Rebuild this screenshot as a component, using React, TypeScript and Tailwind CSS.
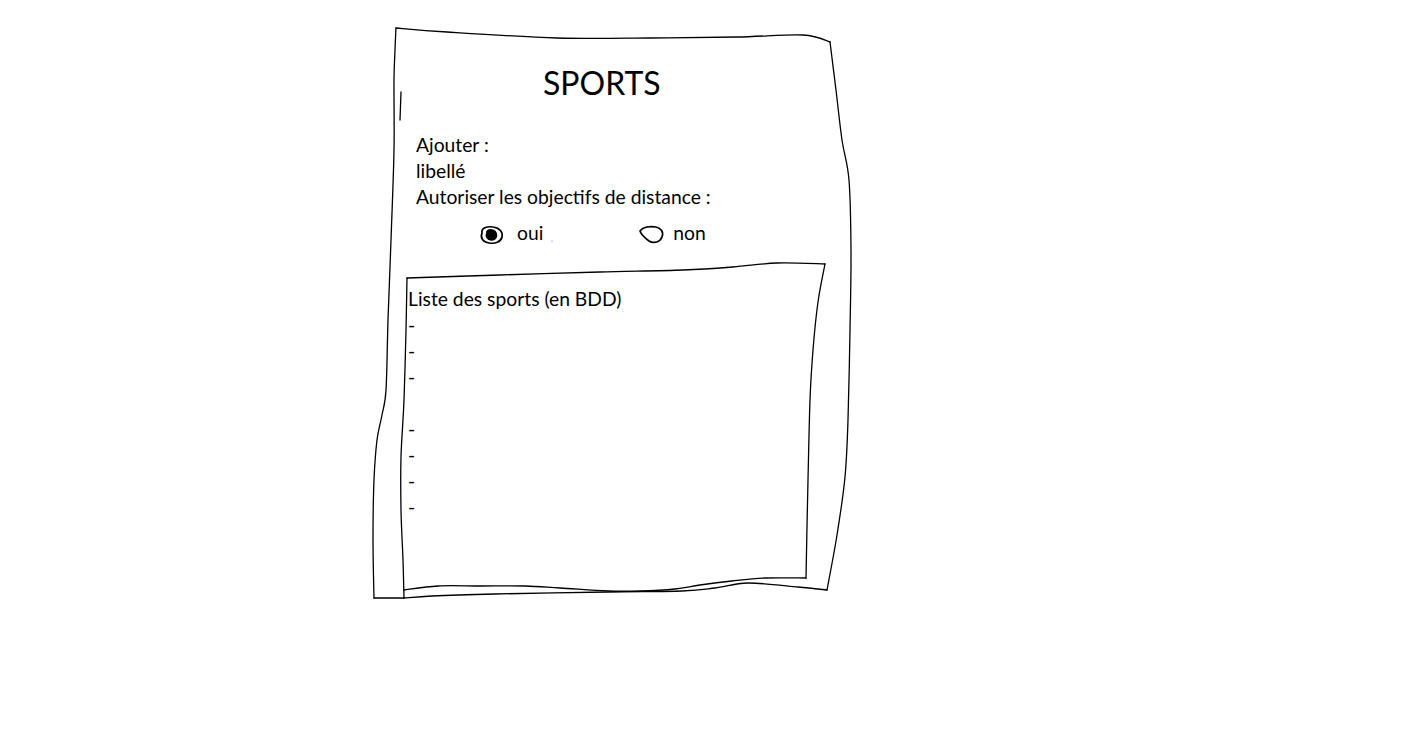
import React from "react";

const font = { fontFamily: "Lato, 'Open Sans', sans-serif" };

type P = [number, number];

function smooth(pts: P[], closed = false): string {
  const n = pts.length;
  const get = (i: number): P => {
    if (closed) return pts[(i + n) % n];
    return pts[Math.max(0, Math.min(n - 1, i))];
  };
  let d = `M${pts[0][0]},${pts[0][1]}`;
  const segs = closed ? n : n - 1;
  for (let i = 0; i < segs; i++) {
    const p0 = get(i - 1);
    const p1 = get(i);
    const p2 = get(i + 1);
    const p3 = get(i + 2);
    const t = 0.5 / 3;
    const c1x = p1[0] + (p2[0] - p0[0]) * t;
    const c1y = p1[1] + (p2[1] - p0[1]) * t;
    const c2x = p2[0] - (p3[0] - p1[0]) * t;
    const c2y = p2[1] - (p3[1] - p1[1]) * t;
    d += ` C${c1x.toFixed(1)},${c1y.toFixed(1)} ${c2x.toFixed(1)},${c2y.toFixed(1)} ${p2[0]},${p2[1]}`;
  }
  return d;
}

const topEdge: P[] = [[396, 28], [447, 32], [557, 38], [650, 38], [737, 37], [803, 35], [830, 42]];
const rightEdge: P[] = [[830, 42], [836, 90], [842, 140], [849, 180], [851, 250], [850, 330], [848, 420], [845, 477], [837, 535], [827, 590]];
const bottomEdge: P[] = [[827, 590], [798, 587], [748, 583], [715, 588], [682, 591], [608, 592], [495, 594], [432, 596], [404, 598]];
const leftEdge: P[] = [[374, 598], [373, 540], [374, 480], [377, 440], [382, 415], [386, 390], [388, 320], [391, 240], [394, 150], [394, 80], [395, 50], [396, 28]];

const innerLeft: P[] = [[404, 598], [403, 560], [401, 510], [401, 457], [404, 400], [406, 330], [407, 278]];
const innerTop: P[] = [[407, 278], [500, 275], [600, 272], [683, 270], [733, 267], [777, 263], [825, 264]];
const innerRight: P[] = [[825, 264], [818, 302], [813, 350], [810, 400], [808, 480], [806, 578]];
const innerBottom: P[] = [[806, 578], [765, 578], [732, 581], [700, 585], [675, 589], [640, 591], [608, 591], [560, 588], [525, 586], [480, 586], [438, 586], [404, 590]];

function Sketch() {
  return (
    <svg
      className="absolute inset-0 pointer-events-none"
      width={1427}
      height={734}
      viewBox="0 0 1427 734"
      fill="none"
      stroke="black"
      strokeWidth={1.3}
      strokeLinejoin="round"
      strokeLinecap="round"
    >
      <path d={smooth(topEdge)} />
      <path d={smooth(rightEdge)} />
      <path d={smooth(bottomEdge)} />
      <path d="M404,598 L374,598" />
      <path d={smooth(leftEdge)} />
      <path d="M401,92 L400,120" />
      <path d={smooth(innerLeft)} />
      <path d={smooth(innerTop)} />
      <path d={smooth(innerRight)} />
      <path d={smooth(innerBottom)} />
      {/* radio oui */}
      <path d="M482,233 C481,228 487,226 493,227 C500,228 503,232 502,237 C501,242 495,244 489,243 C483,242 480,238 482,233 Z" strokeWidth={1.7} />
      <path d="M487,232 C489,229 495,230 496,234 C497,238 493,241 489,239 C486,237 486,234 488,233 L493,236 L490,234 Z" fill="black" strokeWidth={2.2} />
      {/* radio non */}
      <path d="M640,231 C643,227 650,226 656,227 C661,228 664,232 662,237 C660,242 654,244 649,241 C645,238 641,234 640,231 Z" strokeWidth={1.7} />
      <circle cx={552} cy={241} r={0.6} fill="#3a5ccc" stroke="none" />
    </svg>
  );
}

export default function App() {
  return (
    <div className="relative w-[1427px] h-[734px] bg-white overflow-hidden text-black" style={font}>
      <Sketch />
      <div className="relative flex flex-col pt-[63px]">
        <div className="ml-[543px] text-[32px] leading-[40px]">SPORTS</div>
        <div className="ml-[416px] mt-[29px] flex flex-col text-[19.3px] leading-[26px]">
          <div>Ajouter :</div>
          <div>libellé</div>
          <div>Autoriser les objectifs de distance :</div>
        </div>
        <div className="mt-[10px] flex text-[19.3px] leading-[26px]">
          <span className="ml-[517px]">oui</span>
          <span className="ml-[130px]">non</span>
        </div>
        <div className="ml-[408px] mt-[40px] flex flex-col text-[19.3px] leading-[26px]">
          <div>Liste des sports (en BDD)</div>
          <div>-</div>
          <div>-</div>
          <div>-</div>
          <div className="h-[26px]" />
          <div>-</div>
          <div>-</div>
          <div>-</div>
          <div>-</div>
        </div>
      </div>
    </div>
  );
}
